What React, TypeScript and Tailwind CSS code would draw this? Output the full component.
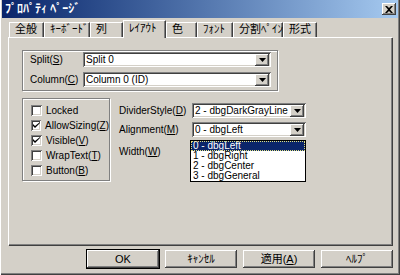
import { ReactNode } from "react";

const raised =
  "bg-[#d4d0c8] shadow-[inset_-1px_-1px_#404040,inset_1px_1px_#fff,inset_-2px_-2px_#808080,inset_2px_2px_#d4d0c8]";
const sunken =
  "bg-white shadow-[inset_1px_1px_#808080,inset_-1px_-1px_#fff,inset_2px_2px_#404040,inset_-2px_-2px_#d4d0c8]";
const etched = "border border-[#808080] shadow-[inset_1px_1px_#fff,1px_1px_#fff]";

const tabs = [
  { label: "全般", w: "w-[35px]" },
  { label: "ｷｰﾎﾞｰﾄﾞ", w: "w-[46px]" },
  { label: "列", w: "w-[33px]" },
  { label: "ﾚｲｱｳﾄ", w: "w-[43px]", active: true },
  { label: "色", w: "w-[31px]" },
  { label: "ﾌｫﾝﾄ", w: "w-[36px]" },
  { label: "分割ﾍﾟｲﾝ", w: "w-[50px]" },
  { label: "形式", w: "w-[34px]" },
];

const Mn = ({ children }: { children: ReactNode }) => <span className="underline underline-offset-1">{children}</span>;

const Arrow = () => (
  <div className={`${raised} w-[14px] h-[12px] flex items-center justify-center`}>
    <svg width="7" height="4" viewBox="0 0 7 4">
      <path d="M0 0h7L3.5 4z" fill="#000" />
    </svg>
  </div>
);

const Combo = ({ text, w }: { text: string; w: string }) => (
  <div className={`${sunken} ${w} h-[15px] flex items-center pl-[3px] pr-[2px]`}>
    <span className="flex-1 leading-none whitespace-nowrap overflow-hidden">{text}</span>
    <Arrow />
  </div>
);

const Check = ({ label, checked }: { label: ReactNode; checked?: boolean }) => (
  <div className="flex items-center h-[15px] gap-[4px]">
    <div className={`${sunken} w-[11px] h-[11px] flex items-center justify-center`}>
      {checked && (
        <svg width="7" height="7" viewBox="0 0 7 7">
          <path d="M0 2v2l2 2 5-5V-0L2 4z" fill="#000" />
        </svg>
      )}
    </div>
    <span className="leading-none whitespace-nowrap">{label}</span>
  </div>
);

const Btn = ({ children, def }: { children: ReactNode; def?: boolean }) => (
  <div
    className={`${raised} w-[72px] h-[18px] flex items-center justify-center leading-none whitespace-nowrap ${
      def ? "outline outline-1 outline-black" : ""
    }`}
  >
    {children}
  </div>
);

export default function App() {
  return (
    <div className="w-[400px] h-[275px] bg-[#d4d0c8] text-[10px] text-black font-['Liberation_Sans','Noto_Sans_CJK_JP',sans-serif] flex flex-col px-[2px] shadow-[inset_1px_0_#fff,inset_-1px_-1px_#404040,inset_-2px_-2px_#808080]">
      {/* title bar */}
      <div className="h-[18px] flex items-center justify-between pl-[3px] pr-[2px] bg-gradient-to-r from-[#0a246a] to-[#a6caf0]">
        <span className="text-white font-bold text-[12px] leading-none">ﾌﾟﾛﾊﾟﾃｨ ﾍﾟｰｼﾞ</span>
        <div className={`${raised} w-[14px] h-[12px] flex items-center justify-center`}>
          <svg width="8" height="7" viewBox="0 0 8 7">
            <path d="M0 0h2l2 2 2-2h2L5 3.5 8 7H6L4 5 2 7H0l3-3.5z" fill="#000" />
          </svg>
        </div>
      </div>

      {/* tabs */}
      <div className="flex items-end pl-[7px] mt-[2px] h-[17px] relative z-10 text-[11px]">
        {tabs.map((t) =>
          t.active ? (
            <div
              key={t.label}
              className={`${t.w} h-[18px] -mb-[1px] bg-[#d4d0c8] border-t border-l border-white border-r border-r-[#404040] shadow-[inset_-1px_0_#808080] pl-[5px] pt-[2px] leading-none whitespace-nowrap`}
            >
              {t.label}
            </div>
          ) : (
            <div
              key={t.label}
              className={`${t.w} h-[15px] border-t border-l border-white border-r border-r-[#404040] shadow-[inset_-1px_0_#808080] pl-[5px] pt-[1px] leading-none whitespace-nowrap`}
            >
              {t.label}
            </div>
          )
        )}
      </div>

      {/* panel */}
      <div className="mx-[6px] h-[208px] border-t border-l border-white shadow-[inset_-1px_-1px_#808080,1px_1px_#404040] pl-[13px] pt-[12px] flex flex-col">
        <div className={`${etched} w-[256px] h-[41px] flex flex-col gap-[5px] pt-[1px] pl-[7px]`}>
          <div className="flex items-center">
            <span className="w-[53px] leading-none">
              Split(<Mn>S</Mn>)
            </span>
            <Combo text="Split 0" w="w-[188px]" />
          </div>
          <div className="flex items-center">
            <span className="w-[53px] leading-none">
              Column(<Mn>C</Mn>)
            </span>
            <Combo text="Column 0 (ID)" w="w-[188px]" />
          </div>
        </div>

        <div className="flex mt-[7px]">
          <div className={`${etched} w-[88px] h-[83px] flex flex-col pl-[8px] pt-[4px]`}>
            <Check label="Locked" />
            <Check
              checked
              label={
                <>
                  AllowSizing(<Mn>Z</Mn>)
                </>
              }
            />
            <Check
              checked
              label={
                <>
                  Visible(<Mn>V</Mn>)
                </>
              }
            />
            <Check
              label={
                <>
                  WrapText(<Mn>T</Mn>)
                </>
              }
            />
            <Check
              label={
                <>
                  Button(<Mn>B</Mn>)
                </>
              }
            />
          </div>

          <div className="ml-[9px] pt-[5px] flex flex-col gap-[4px]">
            <div className="flex items-center">
              <span className="w-[73px] leading-none whitespace-nowrap">
                DividerStyle(<Mn>D</Mn>)
              </span>
              <Combo text="2 - dbgDarkGrayLine" w="w-[114px]" />
            </div>
            <div className="flex items-center relative">
              <span className="w-[73px] leading-none">
                Alignment(<Mn>M</Mn>)
              </span>
              <Combo text="0 - dbgLeft" w="w-[114px]" />
              <div className="absolute left-[71px] top-[18px] w-[116px] bg-white border border-black flex flex-col z-20 text-[10px]">
                <div className="h-[10px] bg-[#0a246a] text-white leading-[10px] pl-[2px] outline outline-1 outline-dotted outline-[#e0e080] -outline-offset-1">
                  0 - dbgLeft
                </div>
                <div className="h-[10px] leading-[10px] pl-[2px]">1 - dbgRight</div>
                <div className="h-[10px] leading-[10px] pl-[2px]">2 - dbgCenter</div>
                <div className="h-[10px] leading-[10px] pl-[2px]">3 - dbgGeneral</div>
              </div>
            </div>
            <div className="leading-none mt-[6px]">
              Width(<Mn>W</Mn>)
            </div>
          </div>
        </div>
      </div>

      {/* buttons */}
      <div className="flex justify-end gap-[6px] pr-[5px] mt-[5px] text-[11px]">
        <Btn def>OK</Btn>
        <Btn>ｷｬﾝｾﾙ</Btn>
        <Btn>
          適用(<Mn>A</Mn>)
        </Btn>
        <Btn>ﾍﾙﾌﾟ</Btn>
      </div>
    </div>
  );
}
